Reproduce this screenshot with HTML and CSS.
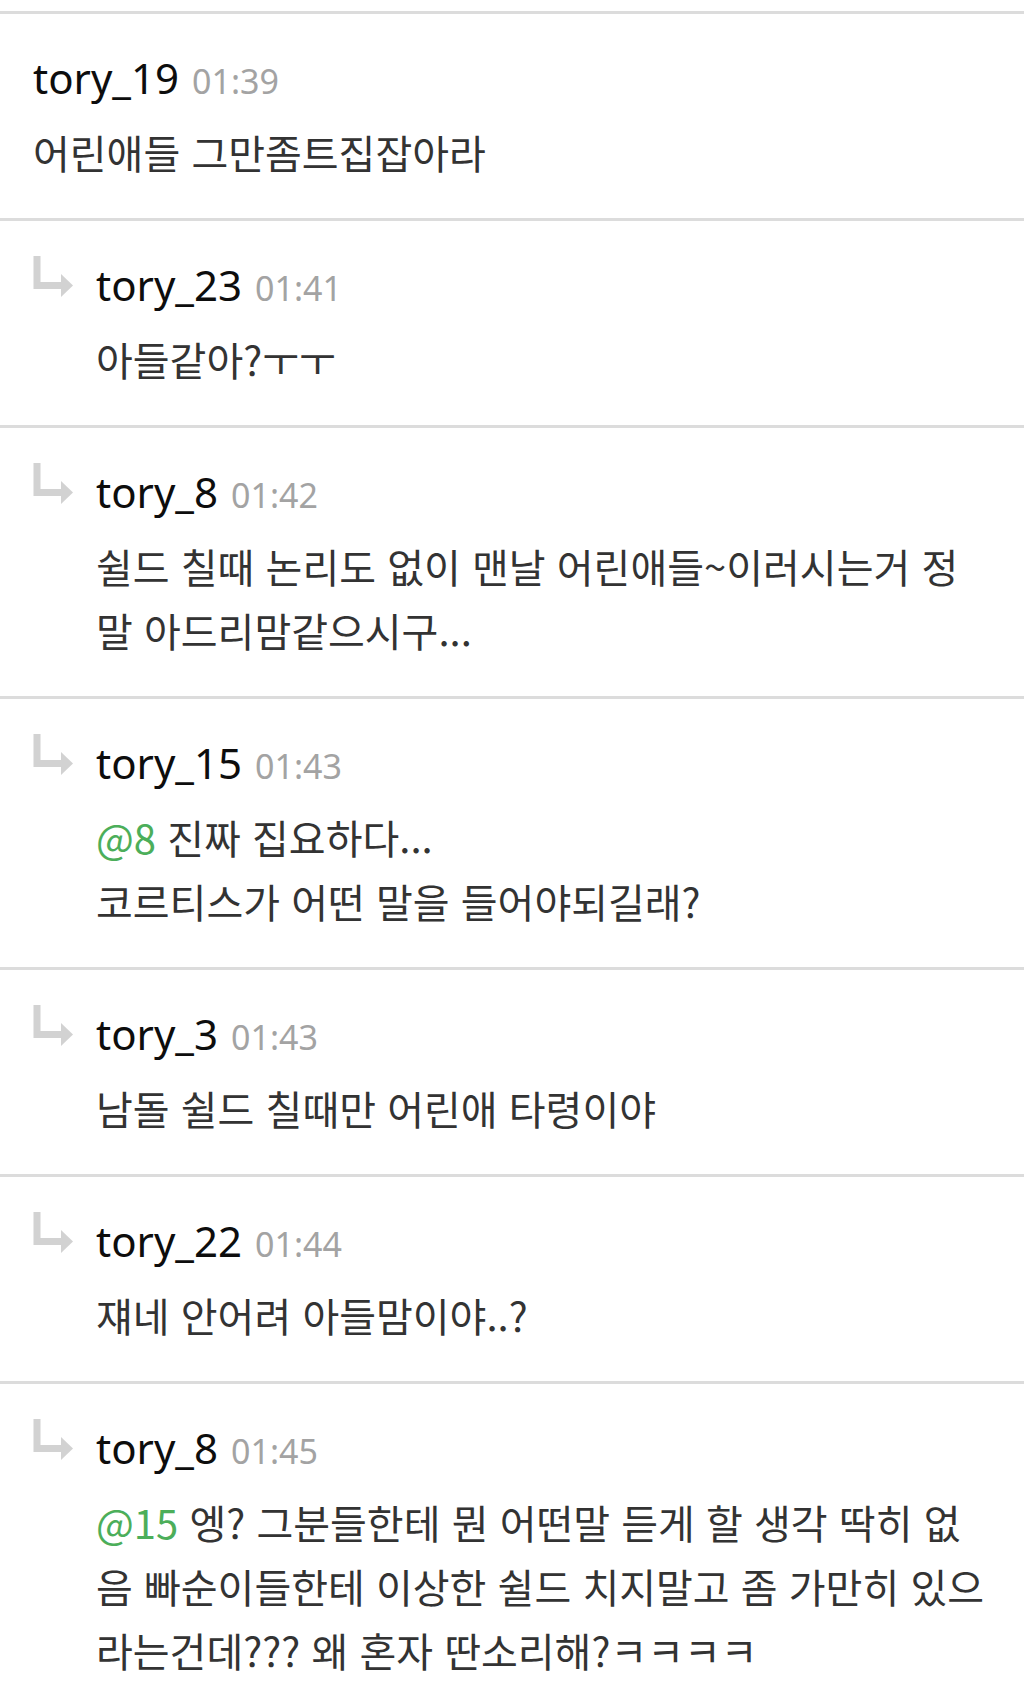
FILE: index.html
```html
<!DOCTYPE html>
<html lang="ko">
<head>
    <meta charset="UTF-8">
    <meta name="viewport" content="width=device-width, initial-scale=1.0">
    <title>댓글</title>
    <link rel="stylesheet" href="styles.css">
</head>
<body>
    <div class="thread">
        <div class="comment">
            <div class="content">
                <div class="head"><span class="name">tory_19</span><span class="time">01:39</span></div>
                <p class="text">어린애들 그만좀트집잡아라</p>
            </div>
        </div>

        <div class="comment reply">
            <svg class="arrow" viewBox="0 0 42 44"><path d="M4 0 V29.5 H30" /><polygon points="28,18 40,29.5 28,41" /></svg>
            <div class="content">
                <div class="head"><span class="name">tory_23</span><span class="time">01:41</span></div>
                <p class="text">아들같아?ㅜㅜ</p>
            </div>
        </div>

        <div class="comment reply">
            <svg class="arrow" viewBox="0 0 42 44"><path d="M4 0 V29.5 H30" /><polygon points="28,18 40,29.5 28,41" /></svg>
            <div class="content">
                <div class="head"><span class="name">tory_8</span><span class="time">01:42</span></div>
                <p class="text">쉴드 칠때 논리도 없이 맨날 어린애들~이러시는거 정말 아드리맘같으시구...</p>
            </div>
        </div>

        <div class="comment reply">
            <svg class="arrow" viewBox="0 0 42 44"><path d="M4 0 V29.5 H30" /><polygon points="28,18 40,29.5 28,41" /></svg>
            <div class="content">
                <div class="head"><span class="name">tory_15</span><span class="time">01:43</span></div>
                <p class="text"><span class="mention">@8</span> 진짜 집요하다...<br>코르티스가 어떤 말을 들어야되길래?</p>
            </div>
        </div>

        <div class="comment reply">
            <svg class="arrow" viewBox="0 0 42 44"><path d="M4 0 V29.5 H30" /><polygon points="28,18 40,29.5 28,41" /></svg>
            <div class="content">
                <div class="head"><span class="name">tory_3</span><span class="time">01:43</span></div>
                <p class="text">남돌 쉴드 칠때만 어린애 타령이야</p>
            </div>
        </div>

        <div class="comment reply">
            <svg class="arrow" viewBox="0 0 42 44"><path d="M4 0 V29.5 H30" /><polygon points="28,18 40,29.5 28,41" /></svg>
            <div class="content">
                <div class="head"><span class="name">tory_22</span><span class="time">01:44</span></div>
                <p class="text">쟤네 안어려 아들맘이야..?</p>
            </div>
        </div>

        <div class="comment reply">
            <svg class="arrow" viewBox="0 0 42 44"><path d="M4 0 V29.5 H30" /><polygon points="28,18 40,29.5 28,41" /></svg>
            <div class="content">
                <div class="head"><span class="name">tory_8</span><span class="time">01:45</span></div>
                <p class="text"><span class="mention">@15</span> 엥? 그분들한테 뭔 어떤말 듣게 할 생각 딱히 없음 빠순이들한테 이상한 쉴드 치지말고 좀 가만히 있으라는건데??? 왜 혼자 딴소리해?ㅋㅋㅋㅋ</p>
            </div>
        </div>
    </div>
</body>
</html>
```

FILE: styles.css
```css
body {
    margin: 0;
    background: #fff;
    font-family: "Noto Sans CJK KR", sans-serif;
}
.thread {
    padding-top: 11px;
}
.comment {
    display: flex;
    gap: 21px;
    border-top: 3px solid #dcdcdc;
    padding: 34px 34px 34px 33px;
}
.content {
    flex: 1;
    min-width: 0;
}
.arrow {
    width: 42px;
    height: 44px;
    margin-top: 1px;
    flex-shrink: 0;
}
.arrow path {
    fill: none;
    stroke: #d2d2d2;
    stroke-width: 7;
}
.arrow polygon {
    fill: #d2d2d2;
}
.head {
    height: 60px;
    line-height: 60px;
    margin-bottom: 12px;
    font-family: "Noto Sans", "Noto Sans CJK KR", sans-serif;
    white-space: nowrap;
}
.name {
    font-size: 42px;
    color: #0d0d0d;
}
.time {
    font-size: 34px;
    color: #a3a3a3;
    margin-left: 13px;
}
.text {
    margin: 0;
    font-size: 40px;
    line-height: 64px;
    color: #333;
}
.mention {
    color: #4cae5a;
}
```
